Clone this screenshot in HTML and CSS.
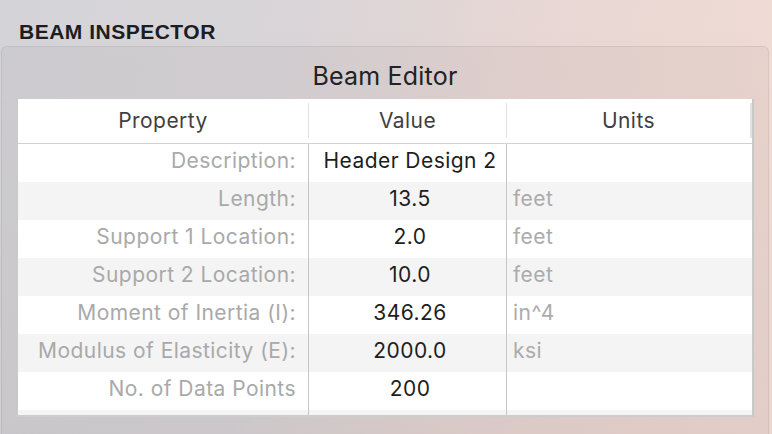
FILE: index.html
```html
<!DOCTYPE html>
<html>
<head>
<meta charset="utf-8">
<link rel="stylesheet" href="styles.css">
</head>
<body>
<h1 class="section-title">BEAM INSPECTOR</h1>
<div class="panel">
  <div class="panel-title">Beam Editor</div>
  <div class="table">
    <div class="thead">
      <div class="th col1">Property</div>
      <div class="th col2">Value</div>
      <div class="th col3">Units</div>
    </div>
    <div class="row">
      <div class="cell label">Description:</div>
      <div class="cell value">Header Design 2</div>
      <div class="cell unit"></div>
    </div>
    <div class="row alt">
      <div class="cell label">Length:</div>
      <div class="cell value">13.5</div>
      <div class="cell unit">feet</div>
    </div>
    <div class="row">
      <div class="cell label">Support 1 Location:</div>
      <div class="cell value">2.0</div>
      <div class="cell unit">feet</div>
    </div>
    <div class="row alt">
      <div class="cell label">Support 2 Location:</div>
      <div class="cell value">10.0</div>
      <div class="cell unit">feet</div>
    </div>
    <div class="row">
      <div class="cell label">Moment of Inertia (I):</div>
      <div class="cell value">346.26</div>
      <div class="cell unit">in^4</div>
    </div>
    <div class="row alt">
      <div class="cell label">Modulus of Elasticity (E):</div>
      <div class="cell value">2000.0</div>
      <div class="cell unit">ksi</div>
    </div>
    <div class="row">
      <div class="cell label">No. of Data Points</div>
      <div class="cell value">200</div>
      <div class="cell unit"></div>
    </div>
    <div class="row alt filler">
      <div class="cell"></div>
      <div class="cell"></div>
      <div class="cell"></div>
    </div>
  </div>
</div>
</body>
</html>
```
FILE: styles.css
```css
html, body {
  margin: 0;
  padding: 0;
}
body {
  width: 772px;
  height: 434px;
  overflow: hidden;
  font-family: Inter, "Liberation Sans", sans-serif;
  background:
    linear-gradient(180deg, rgba(255,255,255,0) 0%, rgba(0,0,0,0.03) 100%),
    linear-gradient(100deg, #d4d4d8 0%, #d9d5d8 35%, #e8d7d4 65%, #f2dcd5 100%);
}
.section-title {
  margin: 0 0 2px 0;
  padding: 20px 0 0 19px;
  font-family: "Liberation Sans", Arial, sans-serif;
  font-size: 21px;
  line-height: 24px;
  font-weight: 700;
  letter-spacing: 0.5px;
  color: #1d1d1f;
}
.panel {
  margin: 0 3px 0 1px;
  height: 387px;
  border: 1px solid rgba(0,0,0,0.06);
  border-bottom: none;
  border-radius: 6px 6px 0 0;
  background: rgba(60,40,40,0.045);
}
.panel-title {
  padding: 14px 0 8px;
  text-align: center;
  font-size: 25px;
  line-height: 30px;
  letter-spacing: 0.2px;
  color: #222;
}
.table {
  margin: 0 14px 0 15px;
  background: #fff;
  border-left: 1px solid #c9c9c9;
  border-right: 2px solid #c9c9c9;
  border-bottom: 2px solid #cdcdcd;
  font-size: 21px;
  letter-spacing: 0.45px;
}
.thead {
  display: grid;
  grid-template-columns: 291px 198px 245px;
  padding: 4px 0 5px;
  border-bottom: 1px solid #d2d2d2;
}
.th {
  line-height: 35px;
  text-align: center;
  color: #3f3f3f;
  border-right: 1px solid #e2e2e2;
}
.th.col3 {
  border-right: 2px solid #e2e2e2;
}
.row {
  display: grid;
  grid-template-columns: 291px 198px 245px;
  background: #fff;
}
.row.alt {
  background: #f4f4f4;
}
.cell {
  line-height: 34px;
  height: 34px;
  padding-bottom: 4px;
  white-space: nowrap;
}
.cell:nth-child(1), .cell:nth-child(2) {
  border-right: 1px solid #c6c6c6;
}
.label {
  text-align: right;
  padding-right: 12px;
  color: #a9a9a9;
}
.value {
  text-align: center;
  padding-left: 5px;
  color: #1e1e1e;
}
.unit {
  padding-left: 6px;
  color: #ababab;
}
.filler .cell {
  height: 5px;
  line-height: 5px;
  padding: 0;
}
```
